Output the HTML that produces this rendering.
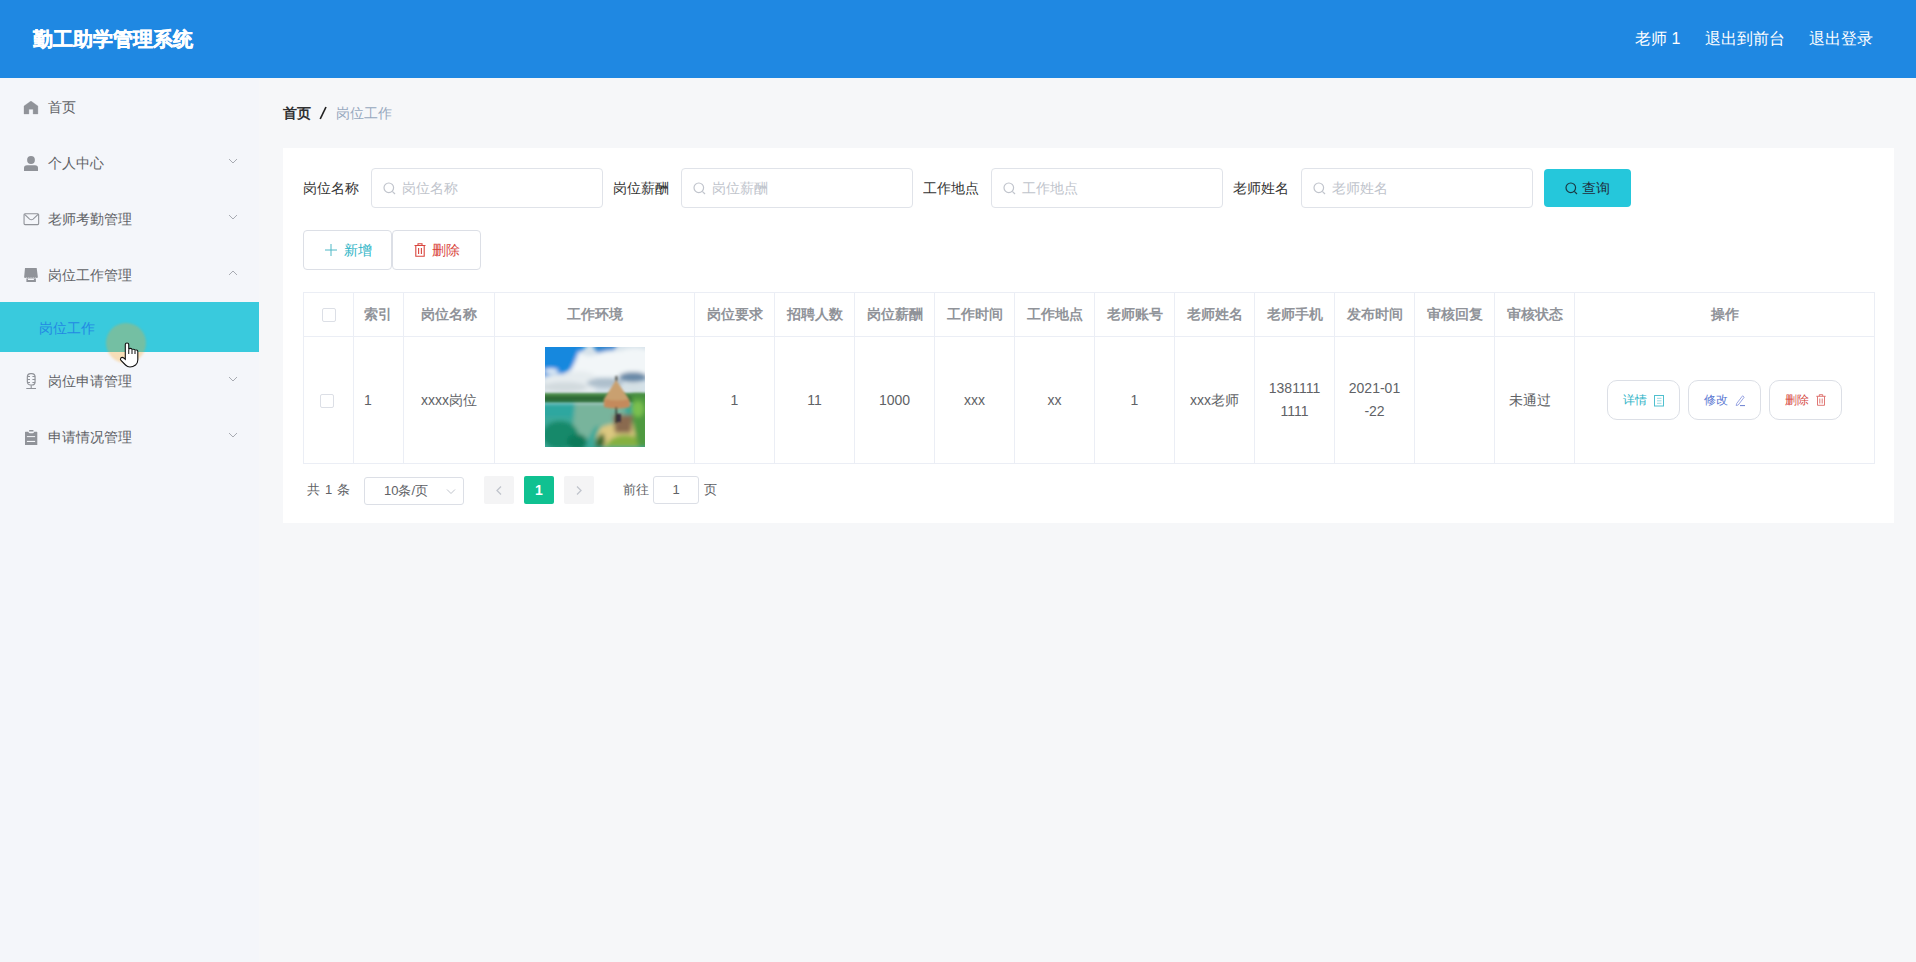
<!DOCTYPE html>
<html><head><meta charset="utf-8">
<style>
*{box-sizing:border-box;margin:0;padding:0}
html,body{width:1916px;height:962px;overflow:hidden}
body{font-family:"Liberation Sans",sans-serif;background:#f6f7f9;color:#606266;position:relative;font-size:14px}
.abs{position:absolute}
.hdr{left:0;top:0;width:1916px;height:78px;background:#1f88e2}
.title{left:33px;top:26px;font-size:20px;font-weight:bold;color:#fff;-webkit-text-stroke:0.4px #fff;line-height:26px;white-space:nowrap}
.hr{top:28px;font-size:16px;color:#fff;line-height:22px;white-space:nowrap}
.side{left:0;top:78px;width:259px}
.mi{position:absolute;left:0;width:259px;height:56px;line-height:56px;font-size:14px;color:#606266}
.mi .t{position:absolute;left:48px;top:1px}
.mi svg.ic{position:absolute;left:23px}
.mi svg.ar{position:absolute;left:228px}
.act{left:0;top:302px;width:259px;height:50px;background:#39cadd}
.act .t{position:absolute;left:39px;top:16px;line-height:20px;color:#2389e3;font-size:14px}
.bc{top:103px;line-height:20px;font-size:14px;white-space:nowrap}
.card{left:283px;top:148px;width:1611px;height:375px;background:#fff}
.lbl{top:178px;line-height:20px;font-size:14px;color:#333;white-space:nowrap;width:56px;overflow:hidden}
.inp{top:168px;width:232px;height:40px;border:1px solid #e0e3e9;border-radius:4px;background:#fff}
.inp .ph{position:absolute;left:30px;top:9px;line-height:20px;color:#c0c4cc;font-size:14px}
.inp svg{position:absolute;left:11px;top:13px}
.btn{border:1px solid #dcdfe6;border-radius:4px;background:#fff;font-size:14px;white-space:nowrap}
table{border-collapse:collapse;table-layout:fixed}
td,th{border:1px solid #ebeef5;text-align:center;font-size:14px;padding:0}
th{color:#909399;font-weight:bold;height:44px;padding-top:1px}
td{color:#606266;height:127px}
.opb{width:73px;height:40px;border:1px solid #dcdfe6;border-radius:10px;background:#fff}
.pg{top:480px;line-height:20px;font-size:13px;color:#606266;white-space:nowrap}
</style></head><body>
<div class="abs" style="left:0;top:78px;width:259px;height:884px;background:#f4f6fa"></div>
<div class="abs hdr"></div>
<div class="abs title">勤工助学管理系统</div>
<div class="abs hr" style="left:1635px">老师 1</div>
<div class="abs hr" style="left:1705px">退出到前台</div>
<div class="abs hr" style="left:1809px">退出登录</div>

<!-- sidebar -->
<div class="mi" style="top:78px"><svg class="ic" style="top:23px" width="16" height="14" viewBox="0 0 16 14"><path d="M7.95 0 L14.9 5 V13 H10.1 V8.3 H5.9 V13 H1 V5 Z" fill="#909399" stroke="#909399" stroke-width="0.3" stroke-linejoin="round"/></svg><span class="t">首页</span></div>
<div class="mi" style="top:134px"><svg class="ic" style="top:21px" width="16" height="16" viewBox="0 0 16 16"><circle cx="8" cy="5" r="3.9" fill="#909399"/><path d="M1 16 V12.8 Q1 10.3 4 10.3 H12 Q15 10.3 15 12.8 V16 Z" fill="#909399"/></svg><span class="t">个人中心</span><svg class="ar" style="top:24px" width="10" height="6" viewBox="0 0 10 6"><path d="M1 1 L5 5 L9 1" stroke="#a8abb2" stroke-width="1" fill="none"/></svg></div>
<div class="mi" style="top:190px"><svg class="ic" style="top:22px" width="17" height="14" viewBox="0 0 17 14"><rect x="1.05" y="1.8" width="14.6" height="10.8" rx="1" fill="none" stroke="#909399" stroke-width="1.1"/><path d="M1.6 2.3 L6.6 7.1 Q8.35 8.4 10.1 7.1 L15.1 2.3" fill="none" stroke="#909399" stroke-width="1.1"/></svg><span class="t">老师考勤管理</span><svg class="ar" style="top:24px" width="10" height="6" viewBox="0 0 10 6"><path d="M1 1 L5 5 L9 1" stroke="#a8abb2" stroke-width="1" fill="none"/></svg></div>
<div class="mi" style="top:246px"><svg class="ic" style="top:20px" width="16" height="18" viewBox="0 0 16 18"><path d="M2 2 H13.7 L14.9 11.5 Q13.7 12.3 12.6 11.6 Q11.5 12.3 10.3 11.6 Q9.1 12.3 8 11.6 Q6.9 12.3 5.7 11.6 Q4.5 12.3 3.4 11.6 Q2.2 12.3 1.1 11.5 Z" fill="#909399"/><path d="M3.4 12.4 H12.9 V16 H3.4 Z" fill="#909399"/><rect x="4.9" y="12.7" width="6" height="1.3" fill="#f4f6f9"/></svg><span class="t">岗位工作管理</span><svg class="ar" style="top:24px" width="10" height="6" viewBox="0 0 10 6"><path d="M1 5 L5 1 L9 5" stroke="#a8abb2" stroke-width="1" fill="none"/></svg></div>
<div class="abs act"><span class="t">岗位工作</span></div>
<div class="mi" style="top:352px"><svg class="ic" style="top:21px" width="16" height="18" viewBox="0 0 16 18"><rect x="4.35" y="0.6" width="7.7" height="11.4" rx="3.3" fill="none" stroke="#909399" stroke-width="1.2"/><path d="M4.3 3.5 H7 M4.3 6.5 H7 M4.3 9.5 H7 M9.4 3.5 H12.2 M9.4 6.5 H12.2 M9.4 9.5 H12.2" stroke="#909399" stroke-width="1"/><path d="M8.2 12.3 V15.4 M3.3 15.5 H13" stroke="#909399" stroke-width="1.1"/></svg><span class="t">岗位申请管理</span><svg class="ar" style="top:24px" width="10" height="6" viewBox="0 0 10 6"><path d="M1 1 L5 5 L9 1" stroke="#a8abb2" stroke-width="1" fill="none"/></svg></div>
<div class="mi" style="top:408px"><svg class="ic" style="top:21px" width="16" height="18" viewBox="0 0 16 18"><rect x="6" y="1.1" width="4.6" height="1.5" rx="0.7" fill="#909399"/><path d="M2.5 2.8 H5.2 Q6 4.3 7 4.3 H9.5 Q10.6 4.3 11.2 2.8 H13.8 Q14.3 2.8 14.3 3.3 V16 H2 V3.3 Q2 2.8 2.5 2.8 Z" fill="#909399"/><rect x="3.9" y="7.1" width="8.2" height="1" fill="#f4f6f9"/><rect x="3.9" y="11.9" width="8.2" height="1.1" fill="#f4f6f9"/></svg><span class="t">申请情况管理</span><svg class="ar" style="top:24px" width="10" height="6" viewBox="0 0 10 6"><path d="M1 1 L5 5 L9 1" stroke="#a8abb2" stroke-width="1" fill="none"/></svg></div>

<!-- breadcrumb -->
<div class="abs bc" style="left:283px;font-weight:bold;color:#303133">首页</div>
<svg class="abs" style="left:318px;top:106px" width="10" height="14" viewBox="0 0 10 14"><path d="M8 1 L2.2 13" stroke="#222" stroke-width="1.7"/></svg>
<div class="abs bc" style="left:336px;color:#97a8be">岗位工作</div>

<div class="abs card"></div>
<div class="abs lbl" style="left:303px">岗位名称</div>
<div class="abs inp" style="left:371px"><svg width="13" height="13" viewBox="0 0 13 13"><circle cx="5.8" cy="5.8" r="4.8" fill="none" stroke="#c0c4cc" stroke-width="1.2"/><path d="M9.3 9.3 L12 12" stroke="#c0c4cc" stroke-width="1.2"/></svg><span class="ph">岗位名称</span></div>
<div class="abs lbl" style="left:613px">岗位薪酬</div>
<div class="abs inp" style="left:681px"><svg width="13" height="13" viewBox="0 0 13 13"><circle cx="5.8" cy="5.8" r="4.8" fill="none" stroke="#c0c4cc" stroke-width="1.2"/><path d="M9.3 9.3 L12 12" stroke="#c0c4cc" stroke-width="1.2"/></svg><span class="ph">岗位薪酬</span></div>
<div class="abs lbl" style="left:923px">工作地点</div>
<div class="abs inp" style="left:991px"><svg width="13" height="13" viewBox="0 0 13 13"><circle cx="5.8" cy="5.8" r="4.8" fill="none" stroke="#c0c4cc" stroke-width="1.2"/><path d="M9.3 9.3 L12 12" stroke="#c0c4cc" stroke-width="1.2"/></svg><span class="ph">工作地点</span></div>
<div class="abs lbl" style="left:1233px">老师姓名</div>
<div class="abs inp" style="left:1301px"><svg width="13" height="13" viewBox="0 0 13 13"><circle cx="5.8" cy="5.8" r="4.8" fill="none" stroke="#c0c4cc" stroke-width="1.2"/><path d="M9.3 9.3 L12 12" stroke="#c0c4cc" stroke-width="1.2"/></svg><span class="ph">老师姓名</span></div>
<div class="abs" style="left:1544px;top:169px;width:87px;height:38px;background:#25c7db;border-radius:4px"><svg class="abs" style="left:21px;top:13px" width="13" height="13" viewBox="0 0 13 13"><circle cx="5.8" cy="5.8" r="4.8" fill="none" stroke="#1a3a44" stroke-width="1.2"/><path d="M9.3 9.3 L12 12" stroke="#1a3a44" stroke-width="1.2"/></svg><span class="abs" style="left:38px;top:9px;line-height:20px;font-size:14px;color:#1f2d3d">查询</span></div>
<div class="abs btn" style="left:303px;top:230px;width:89px;height:40px"><svg class="abs" style="left:21px;top:13px" width="12" height="12" viewBox="0 0 12 12"><path d="M6 0 V12 M0 6 H12" stroke="#4fb8c6" stroke-width="1"/></svg><span class="abs" style="left:40px;top:9px;line-height:20px;color:#2bb4c6">新增</span></div>
<div class="abs btn" style="left:392px;top:230px;width:89px;height:40px"><svg class="abs" style="left:21px;top:12px" width="12" height="14" viewBox="0 0 12 14"><path d="M0.5 2.5 H11.5 M4 2.5 V0.8 H8 V2.5 M1.8 2.5 V13.2 H10.2 V2.5 M4.6 5 V11 M7.4 5 V11" stroke="#d9463e" stroke-width="1.1" fill="none"/></svg><span class="abs" style="left:39px;top:9px;line-height:20px;color:#d9463e">删除</span></div>
<table class="abs" style="left:303px;top:292px;width:1571px"><colgroup><col style="width:50px"><col style="width:50px"><col style="width:91px"><col style="width:200px"><col style="width:80px"><col style="width:80px"><col style="width:80px"><col style="width:80px"><col style="width:80px"><col style="width:80px"><col style="width:80px"><col style="width:80px"><col style="width:80px"><col style="width:80px"><col style="width:80px"><col style="width:300px"></colgroup><tr><th><span style="display:inline-block;width:14px;height:14px;border:1px solid #dcdfe6;border-radius:2px;vertical-align:middle;margin-left:1px;position:relative;top:-1px"></span></th><th style="text-align:left;padding-left:10px">索引</th><th>岗位名称</th><th>工作环境</th><th>岗位要求</th><th>招聘人数</th><th>岗位薪酬</th><th>工作时间</th><th>工作地点</th><th>老师账号</th><th>老师姓名</th><th>老师手机</th><th>发布时间</th><th>审核回复</th><th>审核状态</th><th>操作</th></tr><tr><td><span style="display:inline-block;width:14px;height:14px;border:1px solid #dcdfe6;border-radius:2px;vertical-align:middle;margin-left:-3px"></span></td><td style="text-align:left;padding-left:10px">1</td><td style="line-height:23px">xxxx岗位</td><td style="vertical-align:top;padding-top:10px"><div id="img" style="width:100px;height:100px;margin:0 auto;position:relative;overflow:hidden"><svg width="100" height="100" viewBox="0 0 100 100" style="display:block">
<defs>
<filter id="b1" x="-30%" y="-30%" width="160%" height="160%"><feGaussianBlur stdDeviation="2"/></filter>
<filter id="b2" x="-30%" y="-30%" width="160%" height="160%"><feGaussianBlur stdDeviation="1"/></filter>
<clipPath id="cp"><rect width="100" height="100"/></clipPath>
</defs>
<g clip-path="url(#cp)">
<rect width="100" height="100" fill="#d6e2ea"/>
<g filter="url(#b1)">
<path d="M-5 -5 H44 L34 8 L26 22 L16 28 L-5 30 Z" fill="#1688de"/>
<path d="M46 -5 H74 L68 5 L52 6 Z" fill="#2a86d0"/>
<path d="M34 4 Q42 12 52 7 Q62 2 75 4 Q90 -2 105 4 V30 H24 Z" fill="#f2f6f8"/>
<path d="M0 30 Q10 24 20 28 Q35 20 50 28 L50 47 H0 Z" fill="#e6ecef"/>
<ellipse cx="6" cy="24" rx="7" ry="2.5" fill="#eef4f8"/>
<ellipse cx="88" cy="30" rx="14" ry="5" fill="#6a8aa8"/>
<ellipse cx="60" cy="36" rx="18" ry="5" fill="#aebfcc"/>
<ellipse cx="20" cy="40" rx="22" ry="5" fill="#d2dade"/>
<ellipse cx="88" cy="40" rx="10" ry="4" fill="#d4e0e4"/>
</g>
<g filter="url(#b2)">
<rect x="-5" y="46" width="110" height="10" fill="#2f6a34"/>
<rect x="-5" y="46" width="110" height="3" fill="#4a8a4a"/>
</g>
<g filter="url(#b1)">
<rect x="-5" y="56" width="110" height="50" fill="#3aa898"/>
<path d="M-5 56 H35 L30 70 H-5 Z" fill="#2fa7a0"/>
<path d="M30 56 H80 V75 L50 80 L38 100 H26 Z" fill="#78b49c"/>
<ellipse cx="15" cy="88" rx="18" ry="14" fill="#12896a"/>
<ellipse cx="32" cy="95" rx="10" ry="8" fill="#0e7a5a"/>
<path d="M50 100 Q50 88 56 80 Q70 74 96 76 L100 100 Z" fill="#dcc880"/>
<path d="M50 100 Q50 90 58 86 Q62 94 58 100 Z" fill="#3a6a32"/>
<path d="M60 100 Q66 88 80 88 Q95 88 98 100 Z" fill="#86b040"/>
<path d="M86 48 Q98 46 104 50 V100 L94 100 Q86 80 86 48 Z" fill="#4f9a40"/>
<ellipse cx="93" cy="62" rx="6" ry="8" fill="#7ac050"/>
<path d="M68 68 L88 68 L86 86 L70 86 Z" fill="#8a6a50"/>
</g>
<g filter="url(#b2)">
<path d="M71 33 L59 52 Q58 59 60 60 Q72 62 84 60 Q86 58 84 52 Z" fill="#c9a070"/>
<path d="M60 52 Q72 55 84 52 L85 60 Q72 63 59 60 Z" fill="#c48a5c"/>
<rect x="70.5" y="29" width="1.8" height="5" fill="#3a3a30"/>
<rect x="70.6" y="60" width="1.4" height="16" fill="#2a3028"/>
<rect x="72" y="67" width="4" height="8" fill="#3a3040"/>
</g>
</g>
</svg></div></td><td style="line-height:23px">1</td><td style="line-height:23px">11</td><td style="line-height:23px">1000</td><td style="line-height:23px">xxx</td><td style="line-height:23px">xx</td><td style="line-height:23px">1</td><td style="line-height:23px">xxx老师</td><td style="line-height:23px">1381111<br>1111</td><td style="line-height:23px">2021-01<br>-22</td><td style="line-height:23px"></td><td style="line-height:23px;padding-right:10px">未通过</td><td style="padding:0"><div style="position:relative;width:301px;height:125px">
<div class="abs opb" style="left:32px;top:42.5px"><span class="abs" style="left:15px;top:9px;line-height:20px;font-size:12px;color:#2bb2c6">详情</span><svg class="abs" style="left:45.5px;top:13.5px" width="11" height="12" viewBox="0 0 11 12"><rect x="0.5" y="0.5" width="9" height="10.5" fill="none" stroke="#4fc0cf" stroke-width="1"/><path d="M3 3.3 H7.5 M3 5.8 H7.5 M3 8.3 H7.5" stroke="#7fd0da" stroke-width="0.8"/></svg></div>
<div class="abs opb" style="left:113px;top:42.5px"><span class="abs" style="left:15px;top:9px;line-height:20px;font-size:12px;color:#5b78d2">修改</span><svg class="abs" style="left:45.5px;top:13.5px" width="12" height="12" viewBox="0 0 12 12"><path d="M7.6 0.8 L9.2 2.2 L3.2 10 L1.2 10.6 L1.6 8.6 Z" fill="none" stroke="#8f9ce0" stroke-width="0.9"/><path d="M5 10.6 H10" stroke="#6a7fd0" stroke-width="1"/></svg></div>
<div class="abs opb" style="left:194px;top:42.5px"><span class="abs" style="left:15px;top:9px;line-height:20px;font-size:12px;color:#d64a44">删除</span><svg class="abs" style="left:46px;top:13px" width="10" height="12" viewBox="0 0 10 12"><path d="M0.3 2.3 H9.7 M3.3 2.3 V0.7 H6.7 V2.3 M1.5 2.3 V11.3 H8.5 V2.3 M3.8 4.5 V9.5 M6.2 4.5 V9.5" stroke="#dc6a66" stroke-width="0.9" fill="none"/></svg></div>
</div></td></tr></table>
<div class="abs pg" style="left:307px;word-spacing:1.5px">共 1 条</div>
<div class="abs" style="left:364px;top:477px;width:100px;height:28px;border:1px solid #dcdfe6;border-radius:3px;background:#fff"><span class="abs" style="left:19px;top:2.5px;line-height:20px;font-size:13px;color:#606266">10条/页</span><svg class="abs" style="left:81px;top:10px" width="10" height="7" viewBox="0 0 10 7"><path d="M1 1.5 L5 5.5 L9 1.5" stroke="#c0c4cc" stroke-width="1" fill="none"/></svg></div>
<div class="abs" style="left:484px;top:476px;width:30px;height:28px;background:#f4f4f5;border-radius:2px"><svg class="abs" style="left:12px;top:10px" width="6" height="9" viewBox="0 0 6 9"><path d="M5 0.5 L1 4.5 L5 8.5" stroke="#c0c4cc" stroke-width="1.3" fill="none"/></svg></div>
<div class="abs" style="left:524px;top:476px;width:30px;height:28px;background:#10c191;border-radius:2px;color:#fff;font-weight:bold;font-size:14px;line-height:28px;text-align:center">1</div>
<div class="abs" style="left:564px;top:476px;width:30px;height:28px;background:#f4f4f5;border-radius:2px"><svg class="abs" style="left:12px;top:10px" width="6" height="9" viewBox="0 0 6 9"><path d="M1 0.5 L5 4.5 L1 8.5" stroke="#c0c4cc" stroke-width="1.3" fill="none"/></svg></div>
<div class="abs pg" style="left:623px">前往</div>
<div class="abs" style="left:653px;top:476px;width:46px;height:28px;border:1px solid #dcdfe6;border-radius:3px;background:#fff;text-align:center;line-height:26px;font-size:13px;color:#606266">1</div>
<div class="abs pg" style="left:704px">页</div>
<div class="abs" style="left:106px;top:323px;width:40px;height:40px;border-radius:50%;background:rgba(255,165,30,0.3);filter:blur(1px)"></div>
<svg class="abs" style="left:118px;top:341px" width="22" height="28" viewBox="0 0 22 28"><path d="M7.3 3.5 Q7.3 2 9 2 Q10.75 2 10.75 3.5 V8.5 Q10.75 7.4 12.4 7.4 Q14 7.4 14 8.8 Q14 8.2 15.5 8.2 Q17 8.2 17 9.6 Q17 9 18.4 9 Q19.8 9 19.8 10.6 V19 Q19.8 22 17.5 24 Q15 26 12 26 Q9.5 26 7.5 24 L3 19.5 Q1.8 18 3 16.8 Q4.3 15.8 5.8 17 L7.3 18.3 Z" fill="#fff" stroke="#111" stroke-width="1.1"/><path d="M10.75 8.5 V13 M14 8.8 V13 M17 9.6 V13" stroke="#111" stroke-width="1"/></svg>
</body></html>
